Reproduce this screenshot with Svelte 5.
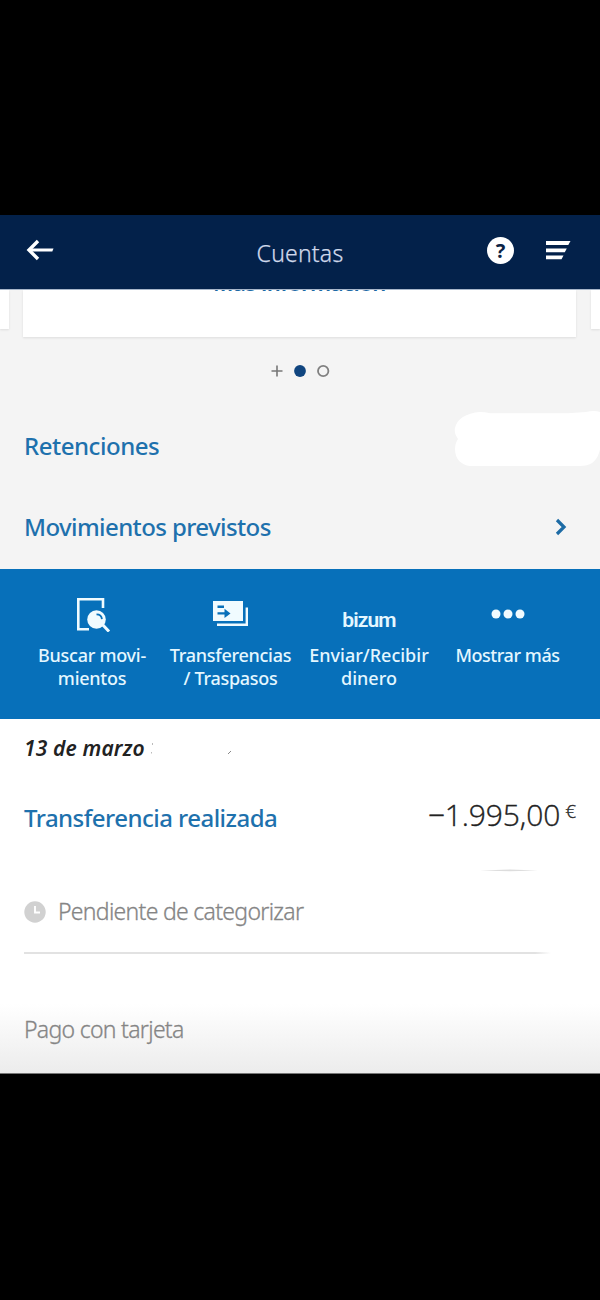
<script>
  const actions = [
    { icon: 'search', lines: ['Buscar movi-', 'mientos'] },
    { icon: 'transfer', lines: ['Transferencias', '/ Traspasos'] },
    { icon: 'bizum', lines: ['Enviar/Recibir', 'dinero'] },
    { icon: 'more', lines: ['Mostrar más'] }
  ];
</script>

<div class="screen">
  <header>
    <svg class="back" width="28" height="22" viewBox="0 0 28 22">
      <path d="M12 2 3 11l9 9" fill="none" stroke="#fff" stroke-width="3.4" />
      <path d="M3 9.500h24.500l-1.200 3H3z" fill="#fff" />
    </svg>
    <h1>Cuentas</h1>
    <div class="tools">
      <span class="help">?</span>
      <svg width="25" height="20" viewBox="0 0 25 20" fill="#fff">
        <path d="M0 1h24.500l-2.200 4H0zM0 8.400h20.800l-2 3.800H0zM0 15.500h17.500l-2 3.800H0z" />
      </svg>
    </div>
  </header>

  <section class="summary">
    <div class="carousel">
      <div class="card side"></div>
      <div class="card main"><span>Más información</span></div>
      <div class="card side"></div>
    </div>
    <div class="dots">
      <svg width="60" height="14" viewBox="0 0 60 14">
        <path d="M1.500 7h11M7 1.500v11" stroke="#777" stroke-width="1.600" />
        <circle cx="30" cy="7" r="5.900" fill="#10457f" />
        <circle cx="53.200" cy="7" r="5.200" fill="none" stroke="#808080" stroke-width="1.800" />
      </svg>
    </div>
    <div class="row">
      <span class="link ret">Retenciones</span>
      <svg class="blank" width="146" height="56" viewBox="0 0 146 56">
        <path d="M1 17C3 8 12 2 26 1q5 0 10 1.200h78L132 1q8-2 14 0v31c1 3 0 7-1 10-3 9-9 13-19 13H16C8 54 1 49 1 38c0-4 1-7 3-10-2-3-4-7-3-11z" fill="#fff" />
      </svg>
    </div>
    <div class="row second">
      <span class="link mov">Movimientos previstos</span>
      <svg class="chevron" width="12" height="18" viewBox="0 0 12 18">
        <path d="m2 2 7 7-7 7" fill="none" stroke="#1d6ba5" stroke-width="3.200" />
      </svg>
    </div>
  </section>

  <nav>
    {#each actions as a}
      <div class="action">
        <div class="icon">
          {#if a.icon === 'search'}
            <svg class="find" width="36" height="36" viewBox="0 0 36 36">
              <path d="M28 12V3.300H3.300v30H14" fill="none" stroke="#f0fbff" stroke-width="2.600" />
              <circle cx="21.500" cy="23.500" r="9.300" fill="#f0fbff" />
              <path d="m27 28 7 7.500" stroke="#f0fbff" stroke-width="3" />
              <path d="M21.500 18.300c3 0 5.200 2 5.400 4.800" fill="none" stroke="#0770ba" stroke-width="1.800" />
            </svg>
          {:else if a.icon === 'transfer'}
            <svg width="36" height="26" viewBox="0 0 36 26">
              <path d="M0 0h30v20H0z" fill="#f0fbff" />
              <path d="M33.800 6.500v17.300H4" fill="none" stroke="#f0fbff" stroke-width="2.400" />
              <path d="M4.500 5.800h6.500M4.500 12.400h9" fill="none" stroke="#0770ba" stroke-width="2.400" />
              <path d="M11.500 7.800 17.500 12.400l-6 4.600z" fill="#0770ba" />
            </svg>
          {:else if a.icon === 'bizum'}
            <span class="bizum">bizum</span>
          {:else}
            <svg width="34" height="10" viewBox="0 0 34 10" fill="#f0fbff">
              <circle cx="5" cy="5" r="4.500" /><circle cx="17" cy="5" r="4.500" /><circle cx="29" cy="5" r="4.500" />
            </svg>
          {/if}
        </div>
        <div class="label l-{a.icon}">
          {#each a.lines as line}<div>{line}</div>{/each}
        </div>
      </div>
    {/each}
  </nav>

  <main>
    <div class="date">
      <span>13 de marzo</span>
      <svg width="90" height="20" viewBox="0 0 90 20">
        <path d="M5.500 5v2M4.500 14v1.500" stroke="#bbb" />
        <path d="m81 16 3-3" stroke="#888" />
      </svg>
    </div>
    <div class="movement">
      <span class="link tra">Transferencia realizada</span>
      <span class="amount">−1.995,00<sup>€</sup></span>
    </div>
    <svg class="trace" width="60" height="3" viewBox="0 0 60 3">
      <path d="M0 1.500 30 .5 58 1.500 30 2.200z" fill="#ddd" />
    </svg>
    <div class="pending">
      <svg width="22" height="22" viewBox="0 0 22 22">
        <circle cx="11" cy="11" r="10.700" fill="#d1d1d1" />
        <path d="M11 5v6.500h5" fill="none" stroke="#fff" stroke-width="1.900" />
      </svg>
      <span>Pendiente de categorizar</span>
    </div>
    <div class="rule"></div>
    <div class="card-payment"><span>Pago con tarjeta</span></div>
  </main>
</div>

<style>
  :global(body) { background: #000; }
  .screen {
    width: 600px; height: 1300px; box-sizing: border-box; padding-top: 215px;
    background: #000; font-family: "Noto Sans", "Open Sans", sans-serif; overflow: hidden;
    white-space: nowrap;
  }
  header {
    height: 74px; background: #03214a; display: grid; box-sizing: border-box;
    grid-template-columns: 1fr auto 1fr; align-items: center; padding: 0 29px 0 26px;
  }
  .back { margin-top: -4px; }
  h1 { margin: 1px 0 0 3px; font-size: 23px; line-height: 30px; font-weight: 300; -webkit-text-stroke: .25px; color: #d0d9eb; letter-spacing: .2px; }
  .tools { display: flex; justify-content: flex-end; align-items: center; gap: 32px; margin-top: -4px; }
  .help {
    width: 27px; height: 27px; border-radius: 50%; background: #fff; color: #0b2345;
    font-size: 20px; font-weight: 700; line-height: 27px; text-align: center;
  }
  .summary { height: 280px; background: #f4f4f4; }
  .carousel { display: flex; height: 48px; border-top: 1px solid #a8b6ca; box-sizing: border-box; }
  .card { background: #fff; box-shadow: 0 1px 2px #ddd; clip-path: inset(0 -3px -4px -3px); }
  .side { width: 9px; height: 39px; }
  .main { width: 553px; margin: 0 15px 0 14px; height: 47px; overflow: hidden; text-align: center; }
  .main span { display: block; margin-top: -23px; font-size: 22px; line-height: 30px; font-weight: 600; color: #1c69a5; letter-spacing: -.5px; }
  .dots { height: 68px; display: flex; align-items: center; justify-content: center; }
  .row { height: 81px; display: flex; align-items: center; justify-content: space-between; padding-left: 24px; }
  .row.second { padding-right: 33px; }
  .blank { margin-top: -14px; }
  .link { font-size: 24px; font-weight: 500; color: #1e71ad; line-height: 32px; }
  .ret { letter-spacing: -.47px; }
  .mov { letter-spacing: -.6px; }
  .tra { letter-spacing: -.53px; margin-top: 1px; }
  nav {
    height: 150px; box-sizing: border-box; background: #0770ba; display: grid;
    grid-template-columns: 138px 139px 138px 139px; padding: 25px 23px 0;
  }
  .action { display: flex; flex-direction: column; align-items: center; color: #e4f7ff; }
  .icon { height: 42px; display: flex; align-items: center; justify-content: center; }
  .icon svg { margin-top: -2px; }
  .icon .find { margin: -3px 0 0 2px; }
  .bizum { font-family: Roboto, sans-serif; font-size: 21px; font-weight: 600; line-height: 24px; margin-top: 9px; letter-spacing: -.9px; }
  .label { font-size: 18px; line-height: 23px; font-weight: 500; text-align: center; margin-top: 8px; }
  .l-search, .l-transfer { letter-spacing: -.27px; }
  .l-more { letter-spacing: -.45px; }
  main { height: 355px; background: linear-gradient(#fff 0, #fff 285px, #ececec 354px); border-bottom: 1px solid #777; box-sizing: border-box; }
  .date { height: 57px; display: flex; align-items: center; padding-left: 24px; }
  .date span { font-size: 21px; line-height: 28px; font-style: italic; font-weight: 600; color: #222; letter-spacing: .15px; }
  .date svg { margin-left: 2px; }
  .movement { height: 82px; display: flex; align-items: center; justify-content: space-between; padding: 0 24px; }
  .amount { font-family: "Open Sans", sans-serif; font-size: 30px; line-height: 40px; font-weight: 350; -webkit-text-stroke: .35px; color: #222; display: flex; margin-top: -4px; letter-spacing: -.1px; }
  sup { font-size: 19px; line-height: 32px; margin-left: 5px; vertical-align: baseline; }
  .trace { display: block; margin: 11px 0 0 480px; }
  .pending { display: flex; align-items: center; gap: 12px; padding-left: 24px; height: 80px; }
  .pending span, .card-payment { font-size: 23px; line-height: 30px; color: #858585; font-weight: 300; -webkit-text-stroke: .3px; letter-spacing: -.7px; }
  .pending span { margin-top: -2px; }
  .rule { height: 2px; width: 527px; margin-left: 24px; background: linear-gradient(90deg, #e2e2e2 97%, #fff); }
  .card-payment { margin: 60px 0 0 24px; }
</style>
